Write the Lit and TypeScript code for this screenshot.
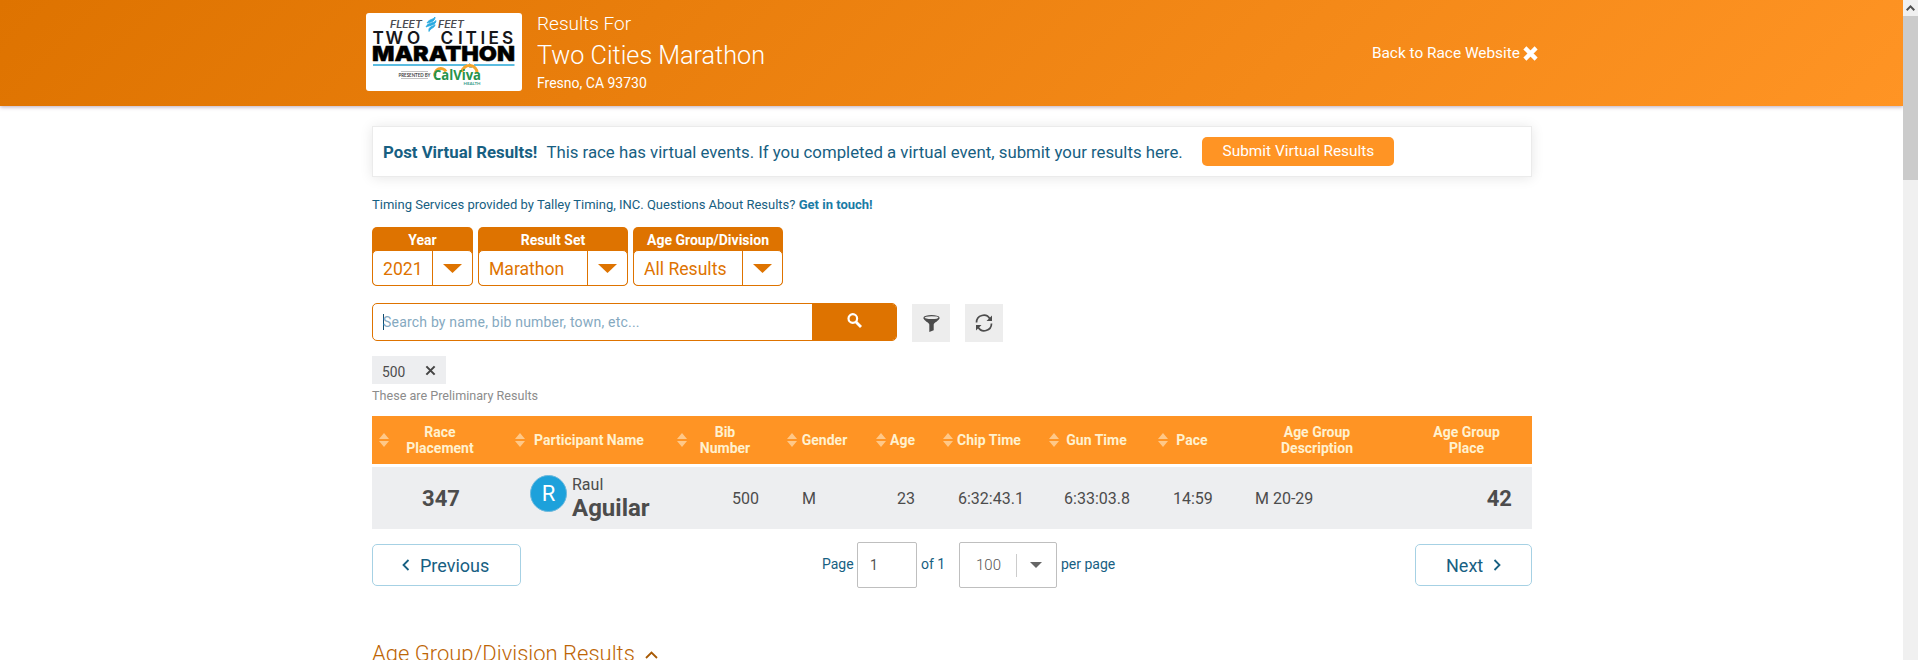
import { LitElement, html, css, svg } from "lit";
import { customElement } from "lit/decorators.js";

interface Column {
  lines: string[];
  sortable: boolean;
}

const columns: Column[] = [
  { lines: ["Race", "Placement"], sortable: true },
  { lines: ["Participant Name"], sortable: true },
  { lines: ["Bib", "Number"], sortable: true },
  { lines: ["Gender"], sortable: true },
  { lines: ["Age"], sortable: true },
  { lines: ["Chip Time"], sortable: true },
  { lines: ["Gun Time"], sortable: true },
  { lines: ["Pace"], sortable: true },
  { lines: ["Age Group", "Description"], sortable: false },
  { lines: ["Age Group", "Place"], sortable: false },
];

const filters = [
  { label: "Year", value: "2021", size: "small" },
  { label: "Result Set", value: "Marathon", size: "large" },
  { label: "Age Group/Division", value: "All Results", size: "large" },
];

@customElement("race-logo")
class RaceLogo extends LitElement {
  static styles = css`
    :host { display: block; width: 156px; height: 78px; }
    .logo { display: block; background: #fff; border-radius: 3px; }
    .sans { font-family: Lato, sans-serif; }
    .inter { font-family: Inter, sans-serif; }
    .wide { font-family: "Open Sans", sans-serif; }
  `;
  render() {
    return html`<svg class="logo" width="156" height="78" viewBox="0 0 156 78">
      ${svg`
      <g class="inter" font-style="italic" font-weight="600" font-size="9.8" fill="#4b4b50">
        <text x="24" y="15" textLength="32" lengthAdjust="spacingAndGlyphs">FLEET</text>
        <text x="72" y="15" textLength="26" lengthAdjust="spacingAndGlyphs">FEET</text>
      </g>
      <path d="M61 10 C63 6 67 7 69 4 C69 8 66 9 61 10Z M60 14 C62 9 67 11 70 7.500 C70 12 65 12 60 14Z M63 18.500 C62 13 67 14 69 11.500 C69 15 65 14.500 63 18.500Z" fill="#27a9e0" stroke="#27a9e0" stroke-width=".8"/>
      <g class="inter" font-weight="600" font-size="17.200" fill="#17171a">
        <text y="30.500" x="6.500 19.500 41">TWO</text>
        <text y="30.500" x="74.500 92 99.500 114.500 122.500 136">CITIES</text>
      </g>
      <text class="inter" x="6" y="48" font-weight="900" font-size="20.800" fill="#000" stroke="#000" stroke-width=".4" textLength="143" lengthAdjust="spacingAndGlyphs">MARATHON</text>
      <path d="M7 52H101 M108 52H148.500" stroke="#5bbce0" stroke-width="1.800"/>
      <path d="M102.500 49.500 L105 51.500 L106.500 54.500 L103 54.500 L104.500 52Z" fill="#178066"/>
      <path d="M35 58.500H62 M35 65.500H62" stroke="#999" stroke-width=".6"/>
      <text class="sans" x="32.500" y="63.800" font-weight="700" font-size="4.800" fill="#444" textLength="32" lengthAdjust="spacingAndGlyphs">PRESENTED BY</text>
      <path d="M69 63a6 6 0 0 1 11-4.500M96 59a6.500 6 0 0 1 15 1" fill="none" stroke="#f5a52b" stroke-width="3"/>
      <text class="wide" x="67" y="67.300" font-weight="700" font-size="13.500" fill="#26934a" textLength="48" lengthAdjust="spacingAndGlyphs">CalViva</text>
      <text class="sans" x="97.500" y="71.500" font-weight="700" font-size="4.400" fill="#389d8b" textLength="17" lengthAdjust="spacingAndGlyphs">HEALTH</text>
      `}
    </svg>`;
  }
}

@customElement("app-root")
class AppRoot extends LitElement {
  static styles = css`
    :host {
      display: flex;
      height: 660px;
      overflow: hidden;
      font-family: Roboto, sans-serif;
      color: #176082;
      background: #fff;
    }
    * { box-sizing: border-box; }
    svg { display: block; flex: none; }
    .page { width: 1903px; height: 660px; overflow: hidden; }
    .scrollbar { width: 15px; background: #f0f0f0; display: flex; flex-direction: column; }
    .scroll-up { height: 16px; display: flex; align-items: center; justify-content: center; }
    .thumb { height: 164px; background: #cbcbcb; }

    .header {
      height: 106px;
      display: flex;
      padding: 13px 365px 0 366px;
      color: #fff;
      background: linear-gradient(135deg, #de7300, #ff9424);
      box-shadow: 0 1px 4px rgba(80, 40, 80, 0.4);
    }
    .titles { margin-left: 15px; flex: 1; white-space: nowrap; }
    .overline { font-size: 19px; font-weight: 300; line-height: 22px; }
    .title { font-size: 25.2px; font-weight: 300; line-height: 29px; margin-top: 6px; }
    .place { font-size: 14px; line-height: 16px; margin-top: 5px; }
    .back { display: flex; align-items: center; height: 20px; margin-top: 30px; gap: 3px; font-size: 15.4px; white-space: nowrap; }

    .content { width: 1160px; margin-left: 372px; }
    .notice {
      height: 51px;
      margin-top: 20px;
      border: 1px solid #ebebeb;
      box-shadow: 0 1px 12px rgba(0, 0, 0, 0.1);
      display: flex;
      align-items: center;
      padding: 0 10px;
      font-size: 16.8px;
      white-space: nowrap;
    }
    .notice-text { margin-left: 9px; width: 656px; }
    .submit {
      width: 192px;
      height: 29px;
      line-height: 29px;
      border-radius: 5px;
      background: #ff9424;
      color: #fff;
      text-align: center;
      font-size: 15.4px;
    }
    .timing { margin-top: 19px; height: 17px; line-height: 17px; font-size: 13px; white-space: nowrap; }
    .timing b { color: #1a7ba5; }

    .filters { display: flex; gap: 5px; margin-top: 14px; }
    .filter { width: 150px; height: 59px; background: #de7300; border-radius: 5px; display: flex; flex-direction: column; }
    .filter.small { width: 101px; }
    .filter-label { height: 23px; line-height: 26px; text-align: center; font-size: 14px; font-weight: 700; color: #fff; }
    .filter-box {
      flex: 1;
      display: flex;
      background: #fff;
      border: 1px solid #de7300;
      border-radius: 5px;
      color: #de7300;
      font-size: 17.6px;
      line-height: 36px;
    }
    .filter-value { flex: 1; padding-left: 10px; height: 34px; }
    .filter-arrow { width: 40px; height: 34px; border-left: 1px solid #de7300; display: flex; align-items: center; justify-content: center; }

    .search-row { display: flex; margin-top: 17px; }
    .search { width: 525px; height: 38px; display: flex; border: 1px solid #de7300; border-radius: 5px; overflow: hidden; }
    .search-input { flex: 1; display: flex; align-items: center; padding-left: 10px; font-size: 14px; color: #85a9bf; letter-spacing: 0.2px; }
    .cursor { width: 1px; height: 16px; background: #124f70; margin-right: -1px; }
    .search-button { width: 84px; background: #de7300; display: flex; align-items: center; justify-content: center; }
    .search-button svg { margin-top: -3px; }
    .tool { width: 38px; height: 38px; margin: 1px 0 0 15px; background: #ededed; display: flex; align-items: center; justify-content: center; }

    .chip { width: 74px; height: 28px; margin-top: 14px; background: #edeef0; color: #4c4c4c; display: flex; align-items: center; padding: 3px 10px 0; font-size: 13.8px; justify-content: space-between; }
    .chip svg { margin-top: -3px; }
    .prelim { margin-top: 4px; height: 16px; line-height: 16px; font-size: 12.6px; color: #8c8c8c; }

    .grid { display: grid; grid-template-columns: 136px 162px 110px 89px 67px 106px 109px 82px 168px 131px; }
    .head { height: 48px; margin-top: 12px; background: #ff9424; color: #fff1cf; }
    .th { display: grid; grid-template-columns: 1fr auto 1fr; align-items: center; padding: 0 7px; font-size: 14px; line-height: 16px; font-weight: 700; text-align: center; white-space: nowrap; }
    .th-label { grid-column: 2; }
    .row { height: 62px; margin-top: 3px; background: #edeef0; color: #4c4c4c; font-size: 16px; align-items: center; white-space: nowrap; }
    .td { padding: 1px 21px 0 22px; }
    .right { text-align: right; }
    .center { text-align: center; }
    .big { font-size: 22px; font-weight: 700; padding-top: 0; padding-right: 20px; }
    .person { display: flex; padding-left: 22px; height: 62px; }
    .avatar { width: 37px; height: 37px; margin-top: 8px; border-radius: 50%; background: #1da1db; border: 1px solid #6cb8dd; color: #fff; font-size: 22px; line-height: 36px; text-align: center; }
    .names { margin: 8px 0 0 5px; }
    .first { line-height: 20px; }
    .last { font-size: 24px; font-weight: 700; line-height: 26px; }

    .pager { display: flex; margin-top: 13px; height: 46px; align-items: center; font-size: 14px; white-space: nowrap; }
    .nav { height: 42px; border: 1px solid #a6d1e4; border-radius: 5px; display: flex; align-items: center; font-size: 18px; }
    .prev { width: 149px; padding-left: 29px; gap: 10px; }
    .next { width: 117px; padding-left: 30px; gap: 10px; margin-left: auto; }
    .page-label { margin: -2px 0 0 301px; width: 35px; }
    .page-input { width: 60px; height: 46px; line-height: 45px; border: 1px solid #bfbfbf; border-radius: 2px; padding-left: 12px; color: #555; }
    .of { margin: -2px 0 0 4px; width: 38px; }
    .per { width: 98px; height: 46px; border: 1px solid #bfbfbf; border-radius: 2px; display: flex; align-items: center; color: #555; font-size: 15px; font-weight: 300; }
    .per-value { width: 56px; padding-left: 16px; }
    .per-arrow { height: 23px; border-left: 1px solid #ccc; padding-left: 13px; display: flex; align-items: center; }
    .per-label { margin: -2px 0 0 4px; }

    .section { display: flex; margin-top: 52px; height: 28px; line-height: 28px; font-size: 22px; font-weight: 300; color: #bd6505; white-space: nowrap; gap: 10px; }
    .section svg { margin-top: 11px; }
  `;

  private sortIcon() {
    return html`<svg width="10" height="14" viewBox="0 0 10 14" fill="#ffc888"><path d="M0 6 5 0l5 6zM0 8h10l-5 6z" /></svg>`;
  }

  private triangle(w: number, h: number, color: string) {
    return html`<svg width=${w} height=${h} viewBox="0 0 20 10" preserveAspectRatio="none" fill=${color}><path d="M0 0H20L10 10z" /></svg>`;
  }

  private cross(size: number, color: string, stroke: number) {
    return html`<svg width=${size} height=${size} viewBox="0 0 16 16"><path d="M2 2 14 14M14 2 2 14" stroke=${color} stroke-width=${stroke} /></svg>`;
  }

  render() {
    return html`
      <div class="page">
        <div class="header">
          <race-logo></race-logo>
          <div class="titles">
            <div class="overline">Results For</div>
            <div class="title">Two Cities Marathon</div>
            <div class="place">Fresno, CA 93730</div>
          </div>
          <div class="back"><span>Back to Race Website</span>${this.cross(15, "#fff", 4.6)}</div>
        </div>
        <div class="content">
          <div class="notice">
            <b>Post Virtual Results!</b>
            <span class="notice-text">This race has virtual events. If you completed a virtual event, submit your results here.</span>
            <span class="submit">Submit Virtual Results</span>
          </div>
          <div class="timing">Timing Services provided by Talley Timing, INC. Questions About Results? <b>Get in touch!</b></div>
          <div class="filters">
            ${filters.map(
              (f) => html`<div class="filter ${f.size}">
                <div class="filter-label">${f.label}</div>
                <div class="filter-box">
                  <span class="filter-value">${f.value}</span>
                  <span class="filter-arrow">${this.triangle(19, 9, "#de7300")}</span>
                </div>
              </div>`
            )}
          </div>
          <div class="search-row">
            <div class="search">
              <div class="search-input"><span class="cursor"></span>Search by name, bib number, town, etc...</div>
              <div class="search-button">
                <svg width="15" height="15" viewBox="0 0 15 15" fill="none" stroke="#fff"><circle cx="5.800" cy="5.500" r="4.300" stroke-width="2.200" /><path d="M9 9l5 5" stroke-width="2.800" /></svg>
              </div>
            </div>
            <div class="tool">
              <svg width="17" height="17" viewBox="0 0 17 17"><path d="M.5 3C1 6 6 7.500 6.300 9.500V17l4.400-1.800V9.500C11 7.500 16 6 16.500 3z" fill="#4c4c4c" /><ellipse cx="8.500" cy="2.700" rx="7.500" ry="2" fill="#ededed" stroke="#4c4c4c" stroke-width="1.200" /></svg>
            </div>
            <div class="tool">
              <svg width="18" height="18" viewBox="0 0 18 18" fill="none" stroke="#4c4c4c" stroke-width="1.700"><path d="M1.500 8.500A7.200 7.200 0 0 1 15 5M16.500 9.500A7.200 7.200 0 0 1 3 13" /><path d="M17 1.500v5.500h-5.500zM1 16.500v-5.500h5.500z" fill="#4c4c4c" stroke="none" /></svg>
            </div>
          </div>
          <div class="chip"><span>500</span>${this.cross(11, "#444", 3)}</div>
          <div class="prelim">These are Preliminary Results</div>

          <div class="grid head">
            ${columns.map(
              (c) => html`<div class="th">
                ${c.sortable ? this.sortIcon() : ""}
                <div class="th-label">${c.lines.map((l) => html`<div>${l}</div>`)}</div>
              </div>`
            )}
          </div>
          <div class="grid row">
            <div class="td center big">347</div>
            <div class="person">
              <div class="avatar">R</div>
              <div class="names"><div class="first">Raul</div><div class="last">Aguilar</div></div>
            </div>
            <div class="td right">500</div>
            <div class="td">M</div>
            <div class="td right">23</div>
            <div class="td right">6:32:43.1</div>
            <div class="td right">6:33:03.8</div>
            <div class="td right">14:59</div>
            <div class="td">M 20-29</div>
            <div class="td right big">42</div>
          </div>

          <div class="pager">
            <div class="nav prev">
              <svg width="8" height="12" viewBox="0 0 8 12" fill="none" stroke="#176082" stroke-width="1.800"><path d="M6.500 1 1.500 6l5 5" /></svg>
              <span>Previous</span>
            </div>
            <span class="page-label">Page</span>
            <span class="page-input">1</span>
            <span class="of">of 1</span>
            <span class="per"><span class="per-value">100</span><span class="per-arrow">${this.triangle(12, 6, "#666")}</span></span>
            <span class="per-label">per page</span>
            <div class="nav next">
              <span>Next</span>
              <svg width="8" height="12" viewBox="0 0 8 12" fill="none" stroke="#176082" stroke-width="1.800"><path d="M1.500 1l5 5-5 5" /></svg>
            </div>
          </div>
          <div class="section">
            <span>Age Group/Division Results</span>
            <svg width="13" height="8" viewBox="0 0 13 8" fill="none" stroke="#a85a04" stroke-width="1.800"><path d="M1 7l5.500-5.500L12 7" /></svg>
          </div>
        </div>
      </div>
      <div class="scrollbar">
        <div class="scroll-up"><svg width="9" height="6" viewBox="0 0 9 6" fill="none" stroke="#505050" stroke-width="2"><path d="M.7 5.200 4.500 1.400 8.300 5.200" /></svg></div>
        <div class="thumb"></div>
      </div>
    `;
  }
}
